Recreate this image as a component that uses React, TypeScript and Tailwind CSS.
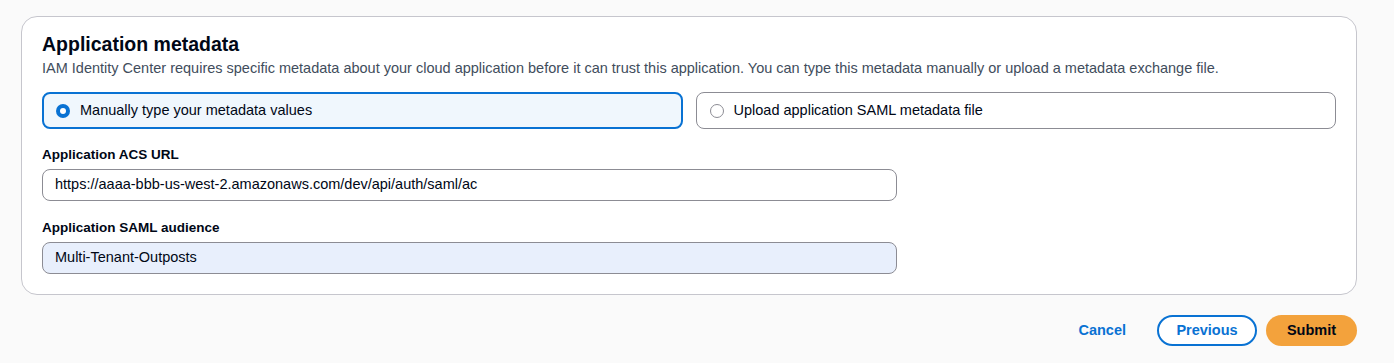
const font = { fontFamily: '"Liberation Sans", Arial, sans-serif' };

const Radio = ({ checked }: { checked: boolean }) =>
  checked ? (
    <span className="flex h-[14px] w-[14px] shrink-0 items-center justify-center rounded-full bg-[#0972d3]">
      <span className="h-[6px] w-[6px] rounded-full bg-white" />
    </span>
  ) : (
    <span className="h-[14px] w-[14px] shrink-0 rounded-full border border-[#8c8c94] bg-white" />
  );

const Tile = ({ label, checked }: { label: string; checked: boolean }) => (
  <div
    className={
      checked
        ? "flex h-[37px] items-center gap-[10px] rounded-lg border-2 border-[#0972d3] bg-[#f0f7fd] px-[12px]"
        : "flex h-[37px] items-center gap-[10px] rounded-lg border border-[#8c8c94] bg-white px-[13px]"
    }
  >
    <Radio checked={checked} />
    <span className="text-[14.5px] text-[#000716]">{label}</span>
  </div>
);

const Field = ({ label, value, filled }: { label: string; value: string; filled?: boolean }) => (
  <div className="w-[855px]">
    <div className="mb-[3px] text-[13.5px] font-bold leading-[22px] text-[#000716]">{label}</div>
    <div
      className={
        "flex h-[32px] items-center rounded-lg border border-[#8c8c94] px-[12px] text-[14.5px] text-[#000716] " +
        (filled ? "bg-[#e8effc]" : "bg-white")
      }
    >
      {value}
    </div>
  </div>
);

export default function App() {
  return (
    <div className="h-[363px] w-[1394px] bg-[#fafafa] pl-[21px] pt-[16px]" style={font}>
      <div className="w-[1336px] rounded-[16px] border border-[#c6c6cd] bg-white px-[20px] pb-[20px] pt-[13px]">
        <h2 className="text-[19.5px] font-bold leading-[28px] text-[#000716]">Application metadata</h2>
        <p className="text-[14.5px] leading-[20px] text-[#414d5c]">
          IAM Identity Center requires specific metadata about your cloud application before it can trust this
          application. You can type this metadata manually or upload a metadata exchange file.
        </p>
        <div className="mt-[14px] grid grid-cols-2 gap-[13px]">
          <Tile label="Manually type your metadata values" checked />
          <Tile label="Upload application SAML metadata file" checked={false} />
        </div>
        <div className="mt-[15px] flex flex-col gap-[16px]">
          <Field label="Application ACS URL" value="https://aaaa-bbb-us-west-2.amazonaws.com/dev/api/auth/saml/ac" />
          <Field label="Application SAML audience" value="Multi-Tenant-Outposts" filled />
        </div>
      </div>
      <div className="mt-[20px] flex w-[1336px] items-center justify-end">
        <button className="mr-[31px] text-[14.5px] font-bold text-[#0972d3]">Cancel</button>
        <button className="mr-[9px] h-[31px] w-[100px] rounded-full border-2 border-[#0972d3] bg-white text-[14.5px] font-bold text-[#0972d3]">
          Previous
        </button>
        <button className="h-[31px] w-[91px] rounded-full bg-[#f3a23c] text-[14.5px] font-bold text-[#000716]">
          Submit
        </button>
      </div>
    </div>
  );
}
